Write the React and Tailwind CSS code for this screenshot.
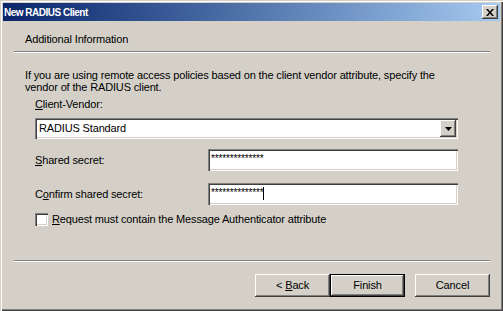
import React from "react";

const sunken =
  "shadow-[inset_1px_1px_0_#808080,inset_2px_2px_0_#404040,inset_-1px_-1px_0_#ffffff,inset_-2px_-2px_0_#d4d0c8]";
const raised =
  "shadow-[inset_-1px_-1px_0_#404040,inset_1px_1px_0_#ffffff,inset_-2px_-2px_0_#808080,inset_2px_2px_0_#d4d0c8]";

function Separator({ className = "" }) {
  return <div className={`ml-[11px] w-[476px] h-[2px] border-t border-t-[#808080] border-b border-b-white ${className}`} />;
}

function Button({ children, primary }) {
  if (primary) {
    return (
      <div className="w-[75px] h-[23px] border border-black">
        <div className={`w-full h-full flex items-center justify-center ${raised}`}>{children}</div>
      </div>
    );
  }
  return <div className={`w-[75px] h-[23px] flex items-center justify-center ${raised}`}>{children}</div>;
}

export default function App() {
  return (
    <div className="w-[503px] h-[311px] bg-[#d4d0c8] p-[3px] flex flex-col text-[11px] leading-[13px] tracking-[-0.15px] text-black font-['Liberation_Sans',Arial,sans-serif] shadow-[inset_1px_1px_0_#d4d0c8,inset_2px_2px_0_#ffffff,inset_-1px_-1px_0_#404040,inset_-2px_-2px_0_#808080]">
      <div className="h-[18px] flex items-center justify-between pl-[1px] pr-[2px] bg-gradient-to-r from-[#0a246a] to-[#a6caf0]">
        <span className="text-white font-bold text-[10px] tracking-[-0.5px]">New RADIUS Client</span>
        <div className={`w-[16px] h-[14px] bg-[#d4d0c8] flex items-center justify-center ${raised}`}>
          <svg width="8" height="7" viewBox="0 0 8 7">
            <path d="M0 0h2l2 2.5L6 0h2L5 3.5L8 7H6L4 4.5L2 7H0l3-3.5z" fill="#000" />
          </svg>
        </div>
      </div>

      <div className="pl-[22px] pt-[12px]">Additional Information</div>
      <Separator className="mt-[5px]" />

      <div className="pl-[22px] flex flex-col">
        <p className="mt-[16px] leading-[12px]">
          If you are using remote access policies based on the client vendor attribute, specify the
          <br />
          vendor of the RADIUS client.
        </p>
        <div className="ml-[10px] mt-[5px]">
          <span className="underline">C</span>lient-Vendor:
        </div>
        <div className={`ml-[10px] mt-[7px] w-[423px] h-[21px] bg-white flex items-center justify-between pl-[4px] pr-[2px] ${sunken}`}>
          <span>RADIUS Standard</span>
          <div className={`w-[16px] h-[17px] bg-[#d4d0c8] flex items-center justify-center ${raised}`}>
            <svg width="7" height="4" viewBox="0 0 7 4">
              <path d="M0 0h7L3.5 4z" fill="#000" />
            </svg>
          </div>
        </div>

        <div className="ml-[10px] mt-[10px] flex items-center">
          <div className="w-[173px]">
            <span className="underline">S</span>hared secret:
          </div>
          <div className={`w-[250px] h-[22px] bg-white pl-[3px] pt-[3px] text-[10px] ${sunken}`}>**************</div>
        </div>

        <div className="ml-[10px] mt-[12px] flex items-center">
          <div className="w-[173px]">
            C<span className="underline">o</span>nfirm shared secret:
          </div>
          <div className={`w-[250px] h-[22px] bg-white pl-[3px] pt-[3px] flex items-start text-[10px] ${sunken}`}>
            <span>**************</span>
            <span className="w-px h-[13px] bg-black mt-[1px]" />
          </div>
        </div>

        <div className="ml-[10px] mt-[8px] flex items-center">
          <div className={`w-[13px] h-[13px] bg-white ${sunken}`} />
          <span className="ml-[4px]">
            <span className="underline">R</span>equest must contain the Message Authenticator attribute
          </span>
        </div>
      </div>

      <Separator className="mt-[34px]" />

      <div className="mt-[12px] flex justify-end pr-[10px]">
        <Button>
          &lt; <span className="underline ml-[3px]">B</span>ack
        </Button>
        <Button primary>Finish</Button>
        <div className="w-[10px]" />
        <Button>Cancel</Button>
      </div>
    </div>
  );
}
